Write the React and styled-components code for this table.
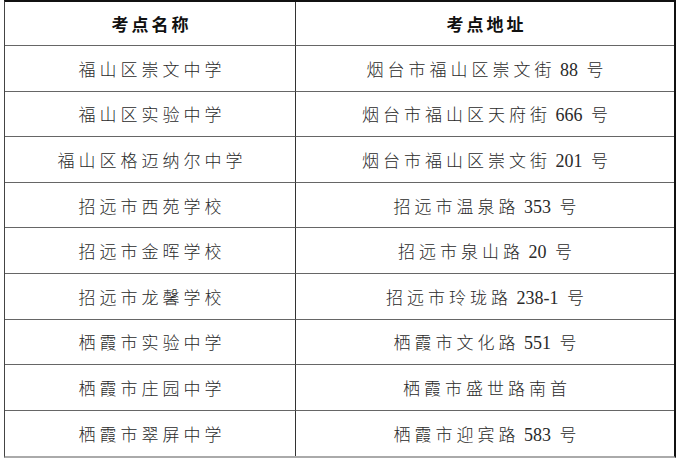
import React from "react";
import styled, { createGlobalStyle } from "styled-components";

const GlobalStyle = createGlobalStyle`
  html, body {
    margin: 0;
    padding: 0;
    background: #fff;
  }
  body {
    font-family: "Liberation Serif", "Noto Sans CJK SC", serif;
  }
`;

const Page = styled.div`
  width: 679px;
  height: 465px;
  padding-left: 4px;
  box-sizing: border-box;
`;

const Table = styled.div`
  width: 672px;
  display: grid;
  grid-template-columns: 291px 1fr;
  border-top: 2px solid #111;
  border-left: 1px solid #444;
  border-right: 2px solid #111;
  border-bottom: 2px solid #aaa;
  box-sizing: border-box;
`;

const Cell = styled.div`
  height: ${(p) => (p.$head ? "44px" : "45.6px")};
  display: flex;
  align-items: center;
  justify-content: center;
  box-sizing: border-box;
  border-right: ${(p) => (p.$first ? "1px solid #333" : "0")};
  border-bottom: ${(p) => (p.$last ? "0" : "1px solid #666")};
  font-size: 17px;
  font-weight: ${(p) => (p.$head ? 700 : 300)};
  color: ${(p) => (p.$head ? "#111" : "#2a2a2a")};
  letter-spacing: ${(p) => (p.$head ? "3px" : "4px")};
  padding-left: ${(p) => (p.$head ? "3px" : "4px")};
  white-space: nowrap;
`;

const Text = styled.span`
  white-space: pre;
`;

const Num = styled.span`
  letter-spacing: 0;
  font-size: 18px;
  padding-right: 4px;
`;

const rows = [
  ["福山区崇文中学", "烟台市福山区崇文街", "88"],
  ["福山区实验中学", "烟台市福山区天府街", "666"],
  ["福山区格迈纳尔中学", "烟台市福山区崇文街", "201"],
  ["招远市西苑学校", "招远市温泉路", "353"],
  ["招远市金晖学校", "招远市泉山路", "20"],
  ["招远市龙馨学校", "招远市玲珑路", "238-1"],
  ["栖霞市实验中学", "栖霞市文化路", "551"],
  ["栖霞市庄园中学", "栖霞市盛世路南首", null],
  ["栖霞市翠屏中学", "栖霞市迎宾路", "583"],
];

function Address({ street, no }) {
  if (!no) return <Text>{street}</Text>;
  return (
    <Text>
      {street}
      <Num>{` ${no} `}</Num>号
    </Text>
  );
}

export default function App() {
  return (
    <>
      <GlobalStyle />
      <Page>
        <Table>
          <Cell $head $first>考点名称</Cell>
          <Cell $head>考点地址</Cell>
          {rows.map(([name, street, no], i) => {
            const last = i === rows.length - 1;
            return (
              <React.Fragment key={name}>
                <Cell $first $last={last}>{name}</Cell>
                <Cell $last={last}>
                  <Address street={street} no={no} />
                </Cell>
              </React.Fragment>
            );
          })}
        </Table>
      </Page>
    </>
  );
}
